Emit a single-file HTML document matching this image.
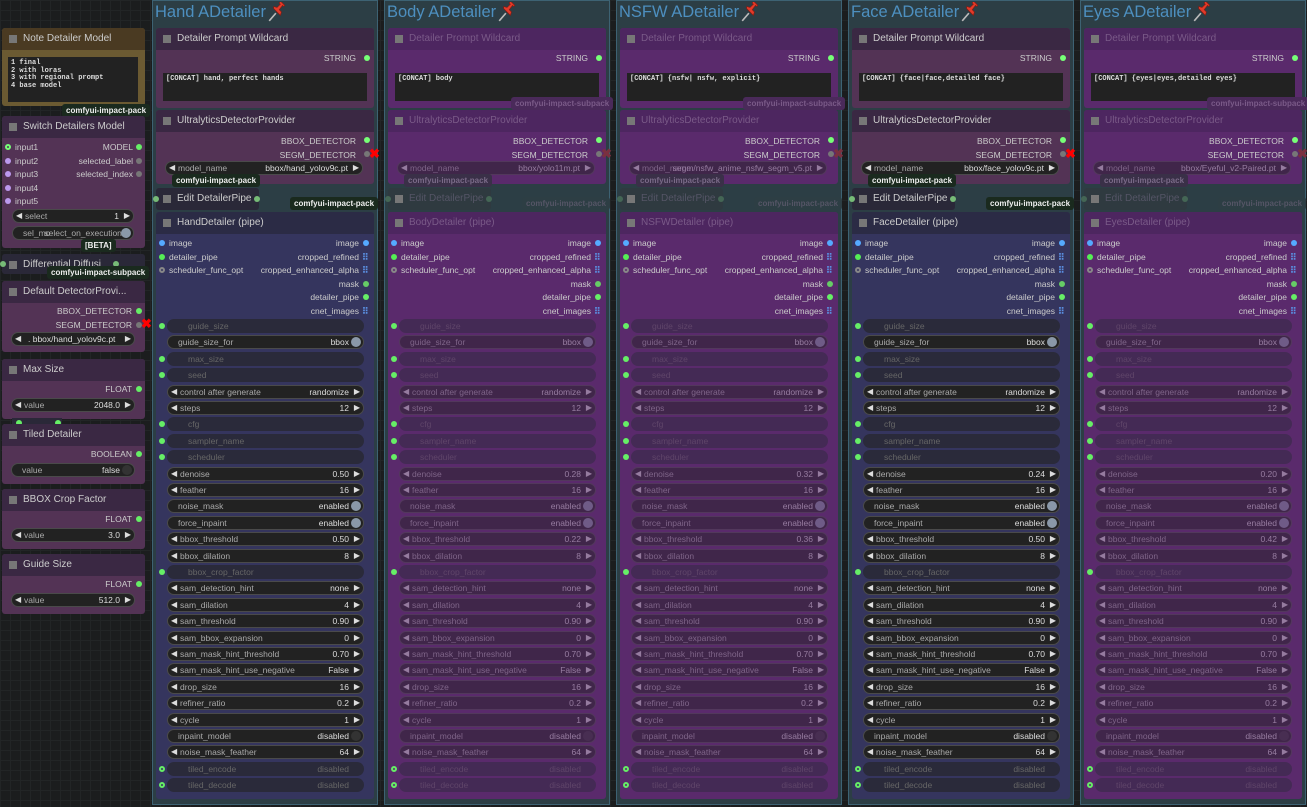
<!DOCTYPE html>
<html><head><meta charset="utf-8">
<style>
*{box-sizing:border-box;margin:0;padding:0}
body{width:1307px;height:807px;overflow:hidden;background:#1b1d1e;font-family:"Liberation Sans",sans-serif;font-size:9px;color:#ccc;position:relative;
background-image:linear-gradient(#222526 1px,transparent 1px),linear-gradient(90deg,#222526 1px,transparent 1px);background-size:10px 10px}
.a{position:absolute}
.grp{position:absolute;top:0;height:805px;width:226px;background:#2c3e45;border:1px solid #3d6273}
.gt{position:absolute;left:2px;top:2px;font-size:16.5px;color:#4d8fbf;white-space:nowrap;display:flex;align-items:center}
.gt svg{margin-left:1px;margin-top:-2px}
.node{position:absolute;border-radius:3px;overflow:hidden}
.tt{position:absolute;left:0;right:0;top:0;height:22px;font-size:10px;padding:5px 0 0 21px;white-space:nowrap}
.tt:before{content:"";position:absolute;left:7px;top:7px;width:8px;height:8px;background:#777}
.w{position:absolute;height:14px;border-radius:7px;background:#222;border:1px solid #4a4a4a;font-size:8.5px;line-height:12px;white-space:nowrap;color:#aaa}
.w .l{position:absolute;left:12px}
.w .v{position:absolute;right:14px;color:#ddd}
.w .al{position:absolute;left:3px;color:#ddd;font-size:8px}
.w .ar{position:absolute;right:3px;color:#ddd;font-size:8px}
.w .tg{position:absolute;right:2px;top:1px;width:10px;height:10px;border-radius:5px;background:#888}
.dot{position:absolute;width:6px;height:6px;border-radius:3px}
.txt{position:absolute;white-space:nowrap;font-size:8.5px}
.tag{position:absolute;background:#1a2a1e;color:#eee;font-size:8px;font-weight:bold;padding:2px 4px;border-radius:3px;white-space:nowrap}
.mono{position:absolute;background:#222;font-family:"Liberation Mono",monospace;font-size:7px;color:#ddd;padding:3px;line-height:7.5px;font-weight:bold;white-space:pre}
</style></head><body>
<script>
function el(cls,st,html,par){var d=document.createElement('div');d.className=cls;d.style.cssText=st;if(html!=null)d.innerHTML=html;(par||document.body).appendChild(d);return d;}
var PIN='<svg width="20" height="20" viewBox="0 0 18 18"><path d="M2 17 L8 10" stroke="#bbb" stroke-width="1.5"/><path d="M6 6 L12 12 L13 9 L11 7 L14 3 L15 4 L16 3 L12 -1 L11 1 L12 2 L9 5 L6 4 Z" fill="#e23b2a" stroke="#8a1a10" stroke-width=".6"/></svg>';
function dot(x,y,c,ring){var d=el('dot','left:'+x+'px;top:'+y+'px;background:'+(ring?'transparent':c)+';'+(ring?'border:2px solid '+c+';':''));return d;}
function grid(x,y){el('txt','left:'+x+'px;top:'+(y-5)+'px;color:#5a8fe0;font-size:9px;font-weight:bold;letter-spacing:-1px','⠿');}
function widget(x,y,w,lab,val,kind,op){
 var s='left:'+x+'px;top:'+y+'px;width:'+w+'px;'+(op?'opacity:'+op+';':'');
 if(kind=='in'){el('w',s+'background:#2a2a3a;border-color:transparent','<span class="l" style="left:20px;color:#666">'+lab+'</span>'+(val?'<span class="v" style="color:#666">'+val+'</span>':''));return;}
 if(kind=='tg'){el('w',s,'<span class="l" style="left:10px">'+lab+'</span><span class="v">'+val+'</span><span class="tg" style="background:'+(val=='disabled'||val=='false'?'#333':'#8a98a8')+'"></span>');return;}
 el('w',s,'<span class="al">◀</span><span class="l">'+lab+'</span><span class="v">'+val+'</span><span class="ar">▶</span>');
}
var cols=[
 {x:152,n:'Hand',act:1,p:'[CONCAT] hand, perfect hands',m:'bbox/hand_yolov9c.pt',d:'0.50',b:'0.50'},
 {x:384,n:'Body',act:0,p:'[CONCAT] body',m:'bbox/yolo11m.pt',d:'0.28',b:'0.22'},
 {x:616,n:'NSFW',act:0,p:'[CONCAT] {nsfw| nsfw, explicit}',m:'segm/nsfw_anime_nsfw_segm_v5.pt',d:'0.32',b:'0.36'},
 {x:848,n:'Face',act:1,p:'[CONCAT] {face|face,detailed face}',m:'bbox/face_yolov9c.pt',d:'0.24',b:'0.50'},
 {x:1080,n:'Eyes',act:0,p:'[CONCAT] {eyes|eyes,detailed eyes}',m:'bbox/Eyeful_v2-Paired.pt',d:'0.20',b:'0.42'}];
cols.forEach(function(c){
 var x=c.x;
 var g=el('grp','left:'+x+'px');
 el('gt','','<span>'+c.n+' ADetailer</span>'+PIN,g);
 var A=c.act;
 var nb=A?'#533355':'#5a2a6c', tb=A?'#3a2843':'#4d2660', tc=A?'#ccc':'#7a5a88';
 var op=A?1:0.45;
 var n=el('node','left:'+(x+4)+'px;top:28px;width:218px;height:80px;background:'+nb);
 el('tt','background:'+tb+';color:'+tc,'Detailer Prompt Wildcard',n);
 el('txt','right:18px;top:25px;color:#ccc','STRING',n);dot(x+212,55,'#7f7');
 el('mono','left:'+(x+11)+'px;top:73px;width:204px;height:28px',c.p);
 if(!A)el('tag','left:'+(x+127)+'px;top:97px;background:#4a2a5a;color:#7a5a88','comfyui-impact-subpack');
 n=el('node','left:'+(x+4)+'px;top:110px;width:218px;height:74px;background:'+nb);
 el('tt','background:'+tb+';color:'+tc,'UltralyticsDetectorProvider',n);
 el('txt','right:18px;top:26px;color:#ccc','BBOX_DETECTOR',n);dot(x+212,137,'#7f7');
 el('txt','right:18px;top:40px;color:#ccc','SEGM_DETECTOR',n);dot(x+212,151,'#777');
 el('txt','left:'+(x+217)+'px;top:146px;color:'+(A?'#f00':'#7a3040')+';font-size:13px;font-weight:bold','✖');
 widget(x+13,161,198,'model_name',c.m,'c',op);
 el('tag','left:'+(x+20)+'px;top:174px;'+(A?'':'background:#3a3048;color:#7a6a88'),'comfyui-impact-pack');
 n=el('node','left:'+(x+4)+'px;top:188px;width:103px;height:22px;background:'+(A?'#2a2838':'#2f3a40'));
 el('tt','background:transparent;color:'+(A?'#ccc':'#556'),'Edit DetailerPipe',n);
 dot(x+1,196,A?'#7b7':'#465');dot(x+102,196,A?'#7b7':'#465');
 el('tag','left:'+(x+138)+'px;top:197px;'+(A?'':'background:#2d3e44;color:#556'),'comfyui-impact-pack');
 var db=A?'#35355e':'#5a2a6c';
 n=el('node','left:'+(x+4)+'px;top:212px;width:218px;height:587px;background:'+db);
 el('tt','background:'+(A?'#2b2b45':tb)+';color:'+tc,c.n+'Detailer (pipe)',n);
 var ins=[['image','#5af'],['detailer_pipe','#5e5'],['scheduler_func_opt','#888']];
 ins.forEach(function(a,i){dot(x+7,240+i*13.5,a[1],i==2);el('txt','left:'+(x+17)+'px;top:'+(238+i*13.5)+'px;color:#ccc',a[0]);});
 var outs=['image','cropped_refined','cropped_enhanced_alpha','mask','detailer_pipe','cnet_images'];
 var oc=['#5af',null,null,'#6c6','#6e6',null];
 outs.forEach(function(o,i){var y=238+i*13.6;el('txt','right:'+(1307-(x+207))+'px;top:'+y+'px;color:#ccc',o);
  if(oc[i])dot(x+211,y+2,oc[i]);else grid(x+210,y+5);});
 var W=[['guide_size','','in'],['guide_size_for','bbox','tg'],['max_size','','in'],['seed','','in'],['control after generate','randomize','c'],['steps','12','c'],['cfg','','in'],['sampler_name','','in'],['scheduler','','in'],['denoise',c.d,'c'],['feather','16','c'],['noise_mask','enabled','tg'],['force_inpaint','enabled','tg'],['bbox_threshold',c.b,'c'],['bbox_dilation','8','c'],['bbox_crop_factor','','in'],['sam_detection_hint','none','c'],['sam_dilation','4','c'],['sam_threshold','0.90','c'],['sam_bbox_expansion','0','c'],['sam_mask_hint_threshold','0.70','c'],['sam_mask_hint_use_negative','False','c'],['drop_size','16','c'],['refiner_ratio','0.2','c'],['cycle','1','c'],['inpaint_model','disabled','tg'],['noise_mask_feather','64','c'],['tiled_encode','disabled','in'],['tiled_decode','disabled','in']];
 W.forEach(function(w,i){var y=319+i*16.4;
  if(w[2]=='in'){dot(x+7,y+4,'#6e6',i>=27);}
  widget(x+15,y,197,w[0],w[1],w[2],op);});
});
function lnode(y,h,title,bg,tb){var n=el('node','left:2px;top:'+y+'px;width:143px;height:'+h+'px;background:'+bg);el('tt','background:'+tb+';color:#ccc',title,n);return n;}
lnode(28,78,'Note Detailer Model','#6b5a32','#4a3a22');
el('mono','left:8px;top:57px;width:130px;height:45px','1 final\n2 with loras\n3 with regional prompt\n4 base model');
el('tag','left:62px;top:104px','comfyui-impact-pack');
lnode(116,132,'Switch Detailers Model','#533355','#3a2843');
['input1','input2','input3','input4','input5'].forEach(function(t,i){dot(5,144+i*13.5,i?'#b9e':'#7f7',!i);el('txt','left:15px;top:'+(142+i*13.5)+'px',t);});
[['MODEL','#6e6'],['selected_label','#777'],['selected_index','#777']].forEach(function(t,i){el('txt','right:'+(1307-133)+'px;top:'+(142+i*13.5)+'px',t[0]);dot(136,144+i*13.5,t[1]);});
widget(12,209,122,'select','1','c');
widget(12,226,122,'sel_mo<span style="margin-left:-6px">select_on_execution</span>','','tg');
el('tag','left:81px;top:239px','[BETA]');
lnode(254,20,'Differential Diffusi','#2a2838','#2a2838');dot(0,261,'#7b7');dot(113,261,'#7b7');
el('tag','left:47px;top:266px','comfyui-impact-subpack');
lnode(281,71,'Default DetectorProvi...','#533355','#3a2843');
el('txt','right:1175px;top:306px','BBOX_DETECTOR');dot(136,308,'#6e6');
el('txt','right:1175px;top:320px','SEGM_DETECTOR');dot(136,322,'#777');
el('txt','left:141px;top:316px;color:#f00;font-size:13px;font-weight:bold','✖');
widget(11,332,124,'<span style="margin-left:4px;color:#ddd">. bbox/hand_yolov9c.pt</span>','','c');
function prim(y,title,type,lab,val,tg){lnode(y,60,title,'#533355','#3a2843');el('txt','right:1175px;top:'+(y+25)+'px',type);dot(136,y+27,'#6e6');widget(11,y+39,124,lab,val,tg?'tg':'c');}
prim(359,'Max Size','FLOAT','value','2048.0');
el('a','left:12px;top:418px;width:50px;height:6px;background:#2a2838');dot(16,420,'#6e6');dot(55,420,'#6e6');
prim(424,'Tiled Detailer','BOOLEAN','value','false',1);
prim(489,'BBOX Crop Factor','FLOAT','value','3.0');
prim(554,'Guide Size','FLOAT','value','512.0');
</script>
</body></html>
